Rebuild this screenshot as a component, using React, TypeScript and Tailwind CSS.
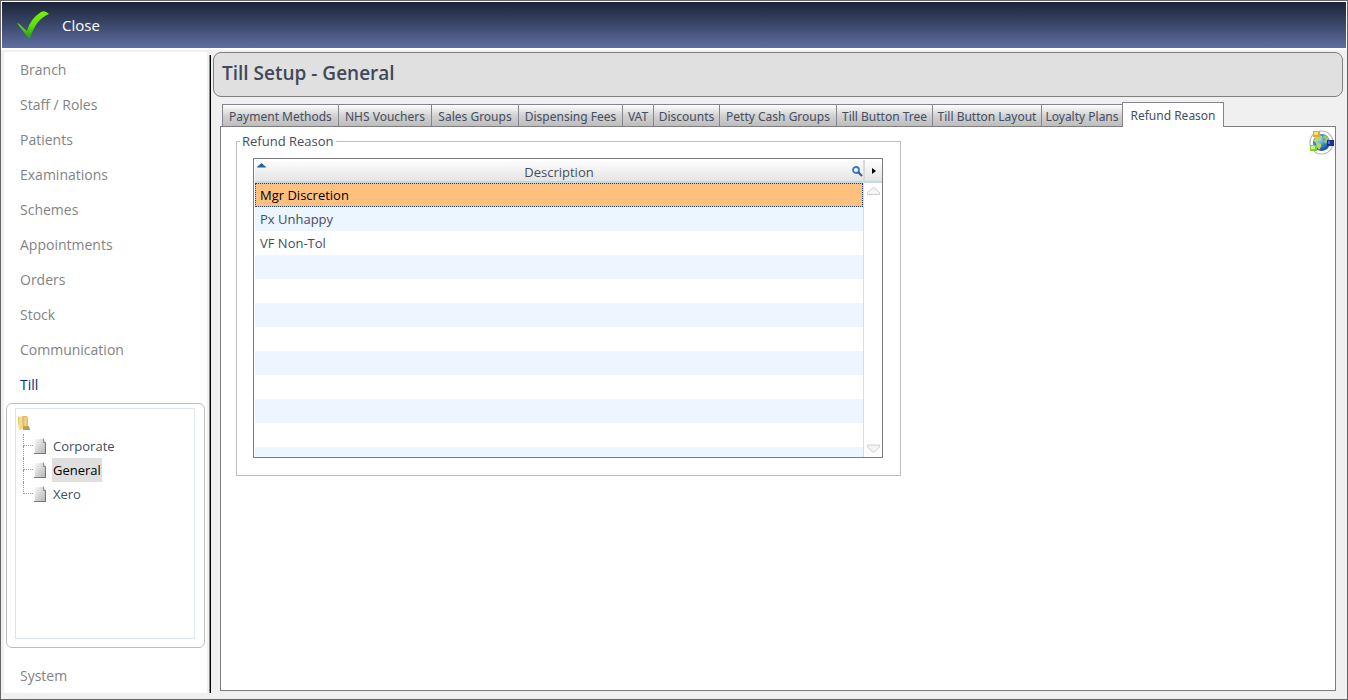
import { useState } from 'react';
import clsx from 'clsx';

const SECTIONS = [
  'Branch',
  'Staff / Roles',
  'Patients',
  'Examinations',
  'Schemes',
  'Appointments',
  'Orders',
  'Stock',
  'Communication',
  'Till',
];

const TREE = ['Corporate', 'General', 'Xero'];

const TABS = [
  { label: 'Payment Methods', width: 'w-[116px]' },
  { label: 'NHS Vouchers', width: 'w-[93px]' },
  { label: 'Sales Groups', width: 'w-[87px]' },
  { label: 'Dispensing Fees', width: 'w-[104px]' },
  { label: 'VAT', width: 'w-[31px]' },
  { label: 'Discounts', width: 'w-[66px]' },
  { label: 'Petty Cash Groups', width: 'w-[117px]' },
  { label: 'Till Button Tree', width: 'w-[96px]' },
  { label: 'Till Button Layout', width: 'w-[109px]' },
  { label: 'Loyalty Plans', width: 'w-[81px]' },
  { label: 'Refund Reason', width: 'w-[102px]' },
];

const REASONS = ['Mgr Discretion', 'Px Unhappy', 'VF Non-Tol'];

function TickIcon() {
  return (
    <svg width="34" height="30" viewBox="0 0 34 30" aria-hidden="true">
      <defs>
        <linearGradient id="tick" x1="0" y1="0" x2="0" y2="1">
          <stop offset="0" stopColor="#74f00a" />
          <stop offset="0.5" stopColor="#5fe00c" />
          <stop offset="1" stopColor="#1f9a10" />
        </linearGradient>
      </defs>
      <path
        d="M1 13 L3 14 L11 21 Q14 9 25 2 Q29 0 33 4 Q20 9 14 28 L13 29 Z"
        fill="url(#tick)"
      />
    </svg>
  );
}

function FolderIcon() {
  return (
    <svg width="13" height="16" viewBox="0 0 13 16" aria-hidden="true">
      <path d="M0 2 L5 1 L5 14 L1 15 Z" fill="#f3dc8e" />
      <path d="M0 2 L1 1.5 L1 15 Z" fill="#d9b75a" />
      <path d="M4 3 L5 1 L9 1 L10 3 L10 11 L8 14 L5 15 Z" fill="#dfbd62" />
      <path d="M6 2 L9 2 L9 10 L6 13 Z" fill="#ecd07e" />
      <path d="M5 11 L11 11 L12 15 L5 15 Z" fill="#c79e45" />
      <rect x="9.5" y="13" width="2" height="2" fill="#6b9fe0" />
    </svg>
  );
}

function PageIcon() {
  return (
    <svg width="13" height="17" viewBox="0 0 13 17" aria-hidden="true">
      <defs>
        <linearGradient id="page" x1="0" y1="0" x2="1" y2="1">
          <stop offset="0" stopColor="#f7f7f7" />
          <stop offset="1" stopColor="#b4b4b4" />
        </linearGradient>
      </defs>
      <path d="M1 1 H9 L12 4 V15 H1 Z" fill="url(#page)" />
      <path d="M9.5 0.5 V4.5 H12" fill="none" stroke="#8a8a8a" />
      <path d="M0 15.5 H12 M11.5 5 V16" fill="none" stroke="#777" />
    </svg>
  );
}

function GlobeIcon() {
  return (
    <svg width="26" height="25" viewBox="1 0 26 25" aria-hidden="true">
      <defs>
        <radialGradient id="globe" cx="0.4" cy="0.35" r="0.7">
          <stop offset="0" stopColor="#9ad4f5" />
          <stop offset="0.5" stopColor="#3a86cc" />
          <stop offset="1" stopColor="#123f84" />
        </radialGradient>
      </defs>
      <circle cx="13.5" cy="12.5" r="11.5" fill="#fff" stroke="#b5b5b5" strokeWidth="1.2" />
      <circle cx="13.5" cy="12.5" r="8.5" fill="url(#globe)" />
      <path d="M7 7 L10 5 L14 6 L14 9 L11 10 L9 12 L13 14 L13 17 L11 20 L9 17 L8 13 L6 11 Z" fill="#b5d86a" />
      <path d="M16 5 L20 7 L21 10 L19 11 L18 14 L16 12 L17 9 L15 7 Z" fill="#9fca5a" />
      <rect x="5" y="1" width="7" height="6" fill="#f8a51c" />
      <rect x="6" y="2" width="4" height="3" fill="#ffdf80" />
      <rect x="19" y="10" width="7" height="6" fill="#1d2f9e" />
      <rect x="20" y="11" width="2" height="3" fill="#5a6be0" />
      <rect x="2" y="15" width="7" height="6" fill="#7fd12c" />
      <rect x="3" y="16" width="4" height="3" fill="#c9f59a" />
    </svg>
  );
}

function SearchIcon() {
  return (
    <svg width="11" height="11" viewBox="0 0 11 11" aria-hidden="true">
      <circle cx="4" cy="4" r="3" fill="none" stroke="#3b78c3" strokeWidth="1.8" />
      <path d="M6.3 6.3 L10 10" stroke="#2c5aa8" strokeWidth="2" />
    </svg>
  );
}

function ScrollArrow({ down }: { down?: boolean }) {
  return (
    <svg width="13" height="9" viewBox="0 0 13 9" aria-hidden="true">
      <path
        d={down ? 'M0.5 1 H12.5 V3 L7.5 8 H5.5 L0.5 3 Z' : 'M5.5 1 H7.5 L12.5 5.5 V7.5 H0.5 V5.5 Z'}
        fill="#f4f4f4"
        stroke="#cfcfcf"
      />
    </svg>
  );
}

function SectionButton({
  label,
  active,
  onClick,
}: {
  label: string;
  active: boolean;
  onClick: () => void;
}) {
  return (
    <button
      type="button"
      onClick={onClick}
      className={clsx(
        'block h-[35px] w-full shrink-0 pl-4 text-left text-[14px]',
        active ? 'text-[#003070]' : 'text-[#838383]',
      )}
    >
      {label}
    </button>
  );
}

function Sidebar({
  section,
  onSection,
  page,
  onPage,
}: {
  section: string;
  onSection: (s: string) => void;
  page: string;
  onPage: (p: string) => void;
}) {
  return (
    <nav className="flex w-[203px] shrink-0 flex-col bg-white" aria-label="Setup sections">
      {SECTIONS.map((s) => (
        <SectionButton key={s} label={s} active={s === section} onClick={() => onSection(s)} />
      ))}
      <div className="mt-px mr-0.5 mb-[10px] ml-0.5 flex flex-1 rounded-md border border-[#bdbdbd] pt-1 pr-[9px] pb-2 pl-2">
        <div className="flex-1 border border-[#dde5ee] pt-1.5 pl-0.5">
          <FolderIcon />
          <ul className="pl-[5px] pt-[3px]">
            {TREE.map((p, i) => (
              <li key={p} className="flex h-6 items-center">
                <span className="flex w-[10px] flex-col self-stretch">
                  <span className="h-1/2 border-b border-l border-dotted border-[#999]" />
                  {i < TREE.length - 1 && (
                    <span className="h-1/2 border-l border-dotted border-[#999]" />
                  )}
                </span>
                <span className="mr-[5px] ml-px">
                  <PageIcon />
                </span>
                <button
                  type="button"
                  onClick={() => onPage(p)}
                  className={clsx('h-6 px-px', p === page && 'bg-[#dfdfdf] text-black')}
                >
                  {p}
                </button>
              </li>
            ))}
          </ul>
        </div>
      </div>
      <SectionButton
        label="System"
        active={section === 'System'}
        onClick={() => onSection('System')}
      />
    </nav>
  );
}

function TabBar({ tab, onTab }: { tab: string; onTab: (t: string) => void }) {
  return (
    <div role="tablist" className='flex h-6 items-end pl-0.5 font-["Noto_Sans","Open_Sans",sans-serif] text-[12px]'>
      {TABS.map(({ label, width }) => {
        const active = label === tab;
        return (
          <button
            key={label}
            type="button"
            role="tab"
            aria-selected={active}
            onClick={() => onTab(label)}
            className={clsx(
              'flex shrink-0 justify-center border-t border-[#85858f] whitespace-nowrap',
              width,
              active
                ? 'z-10 -mb-px h-[25px] border-x bg-white pt-1'
                : 'h-[22px] border-l bg-linear-to-b from-white via-[#d2d2d2] to-[#bdbdbd] pt-[3px]',
            )}
          >
            {label}
          </button>
        );
      })}
    </div>
  );
}

function ReasonGrid() {
  const [selected, setSelected] = useState(REASONS[0]);

  return (
    <div className="flex h-[300px] border border-[#7a7a80] pt-px pl-px">
      <div className="min-w-0 flex-1 overflow-hidden border-r border-[#dcdcdc]">
        <table className="w-full border-separate border-spacing-0">
          <thead>
            <tr>
              <th className="h-[23px] border-b-2 border-[#bcdcec] bg-linear-to-b from-white to-[#e4e4e4] p-0 font-normal">
                <div className="flex h-[21px] items-center">
                  <svg
                    width="9"
                    height="5"
                    viewBox="0 0 9 5"
                    className="mt-[3px] ml-0.5 self-start"
                    aria-hidden="true"
                  >
                    <path d="M0 4 L4.5 0 L9 4 Z" fill="#28659a" />
                    <path d="M0 4.5 H9" stroke="#2fd3ee" />
                  </svg>
                  <span className="flex-1 pt-0.5">Description</span>
                  <button type="button" aria-label="Search description" className="pt-0.5">
                    <SearchIcon />
                  </button>
                </div>
              </th>
            </tr>
          </thead>
        </table>
        <div className="h-[274px] bg-[repeating-linear-gradient(#fff_0_24px,#edf5fe_24px_48px)]">
          <table className="w-full border-collapse">
            <tbody>
              {REASONS.map((r) => (
                <tr
                  key={r}
                  onClick={() => setSelected(r)}
                  className={clsx(
                    'h-6',
                    r === selected &&
                      'bg-[#ffc080] text-black outline-1 -outline-offset-1 outline-dotted outline-[#1d3d63]',
                  )}
                >
                  <td className="py-0 pr-1 pl-[5px]">{r}</td>
                </tr>
              ))}
            </tbody>
          </table>
        </div>
      </div>
      <div className="flex w-[18px] flex-col items-center">
        <button
          type="button"
          aria-label="Show columns"
          className="flex h-[23px] w-full items-center justify-center border-b-2 border-l border-[#bcdcec] border-l-[#d8d8d8] bg-linear-to-b from-white to-[#e4e4e4]"
        >
          <svg width="4" height="6" viewBox="0 0 4 6" aria-hidden="true">
            <path d="M0 0 L4 3 L0 6 Z" fill="#000" />
          </svg>
        </button>
        <button type="button" aria-label="Scroll up" className="mt-1">
          <ScrollArrow />
        </button>
        <button type="button" aria-label="Scroll down" className="mt-auto mb-1">
          <ScrollArrow down />
        </button>
      </div>
    </div>
  );
}

export default function App() {
  const [section, setSection] = useState('Till');
  const [page, setPage] = useState('General');
  const [tab, setTab] = useState('Refund Reason');

  return (
    <div className='flex h-screen flex-col border border-[#666] bg-[#f0f0f0] font-["Open_Sans","Noto_Sans",sans-serif] text-[13px] leading-[18px] text-[#454d5e]'>
      <header className="border border-b-2 border-white bg-linear-to-b from-[#1c2538] to-[#5f6fa3]">
        <button
          type="button"
          className="flex h-[46px] items-center gap-3 pl-[14px] text-[15px] text-white"
        >
          <TickIcon />
          Close
        </button>
      </header>

      <div className="flex min-h-0 flex-1 pt-0.5 pr-1 pb-1.5 pl-[3px]">
        <Sidebar section={section} onSection={setSection} page={page} onPage={setPage} />
        <div className="mt-[3px] ml-0.5 w-0.5 border-x border-r-black border-l-[#8a8a8a]" />

        <main className="ml-0.5 flex min-w-0 flex-1 flex-col">
          <div className="flex h-[45px] shrink-0 items-center rounded-lg border border-[#808080] bg-[#e0e0e0] pl-2">
            <h1 className="pb-1 text-[19px] leading-6 font-semibold text-[#40485a]">
              Till Setup - {page}
            </h1>
          </div>
          <div className="mt-[5px] mr-[7px] -mb-0.5 ml-[7px] flex min-h-0 flex-1 flex-col pb-1">
            <TabBar tab={tab} onTab={setTab} />
            <div className="flex flex-1 items-start justify-between border border-[#7d7d7d] bg-white pl-[15px]">
              <fieldset className="mt-[5px] w-[665px] border border-[#bdbdbd] pt-2 pr-[17px] pb-[17px] pl-4">
                <legend className="-ml-[13px] px-0.5">Refund Reason</legend>
                <ReasonGrid />
              </fieldset>
              <button type="button" aria-label="Translations" className="mt-[3px]">
                <GlobeIcon />
              </button>
            </div>
          </div>
        </main>
      </div>
    </div>
  );
}
